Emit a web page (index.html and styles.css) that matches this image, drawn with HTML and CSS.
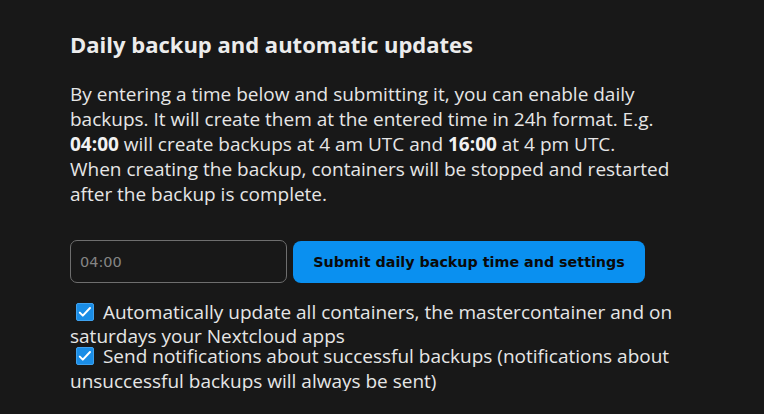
FILE: index.html
```html
<!DOCTYPE html>
<html lang="en">
<head>
<meta charset="utf-8">
<title>Daily backup</title>
<link rel="stylesheet" href="styles.css">
</head>
<body>
<section class="panel">
  <h2 class="title">Daily backup and automatic updates</h2>
  <p class="intro">By entering a time below and submitting it, you can enable daily backups. It will create them at the entered time in 24h format. E.g. <strong>04:00</strong> will create backups at 4 am UTC and <strong>16:00</strong> at 4 pm UTC.<br>When creating the backup, containers will be stopped and restarted after the backup is complete.</p>
  <form class="time-form">
    <input class="time-input" type="text" placeholder="04:00">
    <button class="submit" type="button">Submit daily backup time and settings</button>
  </form>
  <div class="options">
    <label class="option"><span class="check"><svg viewBox="0 0 18 18" width="18" height="18"><path d="M3.8 9.6 6.8 12.6 14 5" fill="none" stroke="#fff" stroke-width="2" stroke-linecap="round" stroke-linejoin="round"/></svg></span> Automatically update all containers, the mastercontainer and on saturdays your Nextcloud apps</label>
    <label class="option"><span class="check"><svg viewBox="0 0 18 18" width="18" height="18"><path d="M3.8 9.6 6.8 12.6 14 5" fill="none" stroke="#fff" stroke-width="2" stroke-linecap="round" stroke-linejoin="round"/></svg></span> Send notifications about successful backups (notifications about unsuccessful backups will always be sent)</label>
  </div>
</section>
</body>
</html>
```

FILE: styles.css
```css
html, body {
  margin: 0;
  padding: 0;
  background: #181818;
}

body {
  font-family: "Open Sans", "Noto Sans", sans-serif;
  color: #e6e6e6;
}

.panel {
  width: 624px;
  padding: 29px 0 0 70px;
}

.title {
  margin: 0;
  font-size: 22px;
  font-weight: 700;
  line-height: 30px;
  color: #ececec;
}

.intro {
  margin: 23px 0 0;
  font-size: 19px;
  line-height: 25px;
}

.intro strong {
  font-weight: 700;
  color: #f2f2f2;
}

.time-form {
  display: flex;
  gap: 6px;
  margin-top: 33px;
  align-items: center;
}

.time-input {
  box-sizing: border-box;
  width: 217px;
  height: 43px;
  padding: 0 9px;
  background: #181818;
  border: 1px solid #6e6e6e;
  border-radius: 7px;
  font-family: "DejaVu Sans", sans-serif;
  font-size: 14.5px;
  color: #ccc;
  outline: none;
}

.time-input::placeholder {
  color: #858585;
}

.submit {
  box-sizing: border-box;
  width: 352px;
  height: 42px;
  margin-top: 1px;
  border: none;
  border-radius: 8px;
  background: #0a90f0;
  color: #0a0a0a;
  font-family: "DejaVu Sans", sans-serif;
  font-weight: 700;
  font-size: 14.3px;
}

.options {
  margin-top: 18.5px;
}

.option {
  display: block;
  font-size: 19px;
  line-height: 20px;
}

.check {
  display: inline-block;
  box-sizing: border-box;
  width: 18px;
  height: 18px;
  margin: 0 4px 5.65px 6px;
  vertical-align: -7.65px;
  background: #1a8de6;
  border: 1px solid #3fa2ef;
  border-radius: 2px;
  overflow: hidden;
}

.check svg {
  display: block;
  margin: -1px;
}
```
